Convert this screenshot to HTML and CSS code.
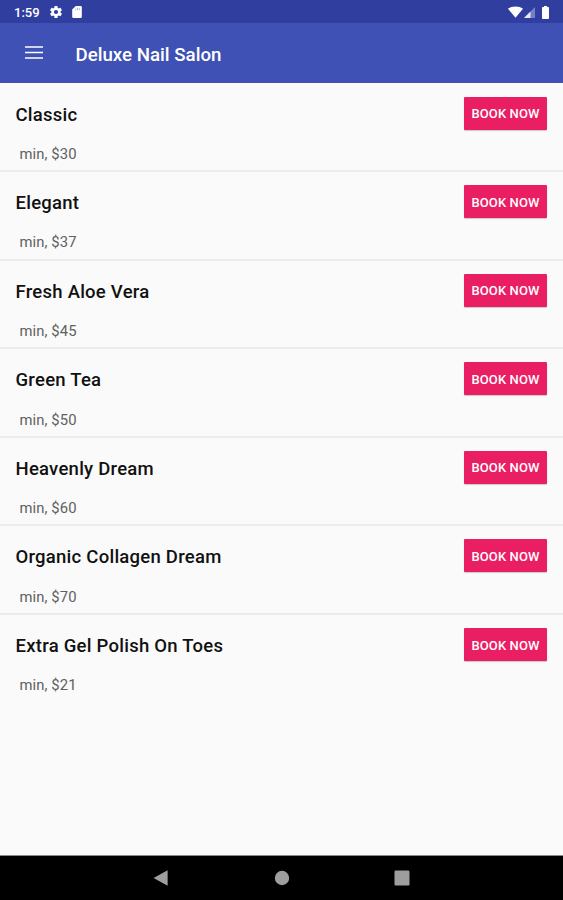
FILE: index.html
```html
<!DOCTYPE html>
<html lang="en">
<head>
    <meta charset="UTF-8">
    <meta name="viewport" content="width=device-width, initial-scale=1.0">
    <title>Deluxe Nail Salon</title>
    <link rel="stylesheet" href="styles.css">
</head>
<body>
    <div class="status-bar">
        <span class="time">1:59</span>
        <svg class="icon-gear" viewBox="2 2 20 20"><path fill="#fff" d="M19.43 12.98c.04-.32.07-.64.07-.98s-.03-.66-.07-.98l2.11-1.65c.19-.15.24-.42.12-.64l-2-3.46c-.12-.22-.39-.3-.61-.22l-2.49 1c-.52-.4-1.08-.73-1.69-.98l-.38-2.65A.49.49 0 0 0 14 2h-4c-.25 0-.46.18-.49.42l-.38 2.65c-.61.25-1.17.59-1.69.98l-2.49-1c-.23-.09-.49 0-.61.22l-2 3.46c-.13.22-.07.49.12.64l2.11 1.65c-.04.32-.07.65-.07.98s.03.66.07.98l-2.11 1.65c-.19.15-.24.42-.12.64l2 3.46c.12.22.39.3.61.22l2.49-1c.52.4 1.08.73 1.69.98l.38 2.65c.03.24.24.42.49.42h4c.25 0 .46-.18.49-.42l.38-2.65c.61-.25 1.17-.59 1.69-.98l2.49 1c.23.09.49 0 .61-.22l2-3.46c.12-.22.07-.49-.12-.64l-2.11-1.65zM12 15.5a3.5 3.5 0 1 1 0-7 3.5 3.5 0 0 1 0 7z"/></svg>
        <svg class="icon-card" viewBox="4 2 16 20"><path fill="#fff" d="M18 2h-8L4.02 8 4 20a2 2 0 0 0 2 2h12a2 2 0 0 0 2-2V4a2 2 0 0 0-2-2z"/><path fill="#a8b0dc" d="M9 6h1.500v3H9zM12 5h1.500v4H12zM15 5h1.500v4H15z"/></svg>
        <div class="status-right">
            <svg class="icon-wifi" viewBox="0 0 16 12"><path fill="#fff" d="M8 12 0 2.600C4.500-.8 11.500-.8 16 2.600z"/></svg>
            <svg class="icon-signal" viewBox="0 0 11 11"><path fill="#7580c5" d="M0 11 11 0v11z"/><path fill="#e8eaf6" d="M0 11 6.500 4.500V11z"/></svg>
            <svg class="icon-battery" viewBox="0 0 7 13"><path fill="#fff" d="M2 0h3v1h1.200q.8 0 .8.800v10.400q0 .8-.8.800H.8q-.8 0-.8-.8V1.800Q0 1 .8 1H2z"/></svg>
        </div>
    </div>
    <div class="app-bar">
        <svg class="icon-menu" viewBox="0 0 18 13"><path stroke="#fff" stroke-width="1.700" d="M0 1h18M0 6.500h18M0 12h18"/></svg>
        <h1>Deluxe Nail Salon</h1>
    </div>
    <div class="services">
        <div class="service">
            <div>
                <div class="service-name">Classic</div>
                <div class="service-info">min, $30</div>
            </div>
            <button class="book">BOOK NOW</button>
        </div>
        <div class="service">
            <div>
                <div class="service-name">Elegant</div>
                <div class="service-info">min, $37</div>
            </div>
            <button class="book">BOOK NOW</button>
        </div>
        <div class="service">
            <div>
                <div class="service-name">Fresh Aloe Vera</div>
                <div class="service-info">min, $45</div>
            </div>
            <button class="book">BOOK NOW</button>
        </div>
        <div class="service">
            <div>
                <div class="service-name">Green Tea</div>
                <div class="service-info">min, $50</div>
            </div>
            <button class="book">BOOK NOW</button>
        </div>
        <div class="service">
            <div>
                <div class="service-name">Heavenly Dream</div>
                <div class="service-info">min, $60</div>
            </div>
            <button class="book">BOOK NOW</button>
        </div>
        <div class="service">
            <div>
                <div class="service-name">Organic Collagen Dream</div>
                <div class="service-info">min, $70</div>
            </div>
            <button class="book">BOOK NOW</button>
        </div>
        <div class="service">
            <div>
                <div class="service-name">Extra Gel Polish On Toes</div>
                <div class="service-info">min, $21</div>
            </div>
            <button class="book">BOOK NOW</button>
        </div>
    </div>
    <div class="nav-bar">
        <svg viewBox="0 0 16 16"><path fill="#9e9e9e" d="M.6 8 14.600.3v15.400z"/></svg>
        <svg viewBox="0 0 16 16"><circle fill="#9e9e9e" cx="8" cy="8" r="7.200"/></svg>
        <svg viewBox="0 0 16 16"><rect fill="#9e9e9e" x=".5" y=".5" width="15" height="15" rx="1.200"/></svg>
    </div>
</body>
</html>
```
FILE: styles.css
```css
body {
    margin: 0;
    height: 900px;
    display: flex;
    flex-direction: column;
    font-family: Roboto, sans-serif;
    background-color: #fafafa;
    overflow: hidden;
}
.status-bar {
    display: flex;
    align-items: center;
    height: 23px;
    padding: 1px 14px 0 14px;
    box-sizing: border-box;
    background-color: #303f9f;
    color: #fff;
}
.time {
    width: 36px;
    font-size: 13px;
    font-weight: 500;
}
.icon-gear {
    width: 12px;
    height: 12px;
}
.icon-card {
    width: 10px;
    height: 12px;
    margin-left: 10px;
}
.status-right {
    display: flex;
    align-items: center;
    margin-left: auto;
}
.icon-wifi {
    width: 15px;
    height: 12px;
}
.icon-signal {
    width: 11px;
    height: 11px;
    margin: 1px 7px 0 1px;
}
.icon-battery {
    width: 7px;
    height: 13px;
}
.app-bar {
    display: flex;
    align-items: center;
    height: 59.5px;
    padding: 0 25px;
    background-color: #3f51b5;
    color: #fff;
}
.icon-menu {
    width: 18px;
    height: 13px;
}
.app-bar h1 {
    margin: 4px 0 0 32.5px;
    font-size: 18.7px;
    font-weight: 500;
}
.services {
    flex: 1;
}
.service {
    display: flex;
    justify-content: space-between;
    align-items: flex-start;
    height: 88.6px;
    padding: 14px 16px 0 15.5px;
    box-sizing: border-box;
}
.service + .service {
    box-shadow: 0 -1px #ececec, inset 0 1px #ececec;
}
.service-name {
    margin-top: 6px;
    font-size: 18.5px;
    font-weight: 500;
    line-height: 24px;
    letter-spacing: 0.25px;
    color: #111;
}
.service-info {
    margin: 18.4px 0 0 4px;
    font-size: 14.8px;
    line-height: 18px;
    letter-spacing: 0.1px;
    color: #616161;
}
.book {
    width: 83px;
    height: 33px;
    padding: 1px 0 0;
    border: none;
    border-radius: 1px;
    background-color: #e91e63;
    box-shadow: 0 1px 1px rgba(0, 0, 0, 0.2);
    color: #fff;
    font-family: inherit;
    font-size: 13px;
    font-weight: 500;
    letter-spacing: 0.1px;
    white-space: nowrap;
}
.nav-bar {
    display: flex;
    justify-content: center;
    align-items: center;
    gap: 104.5px;
    height: 45px;
    padding-bottom: 1px;
    box-sizing: border-box;
    border-top: 1px solid #888;
    background-color: #000;
}
.nav-bar svg {
    width: 16px;
    height: 16px;
}
```
